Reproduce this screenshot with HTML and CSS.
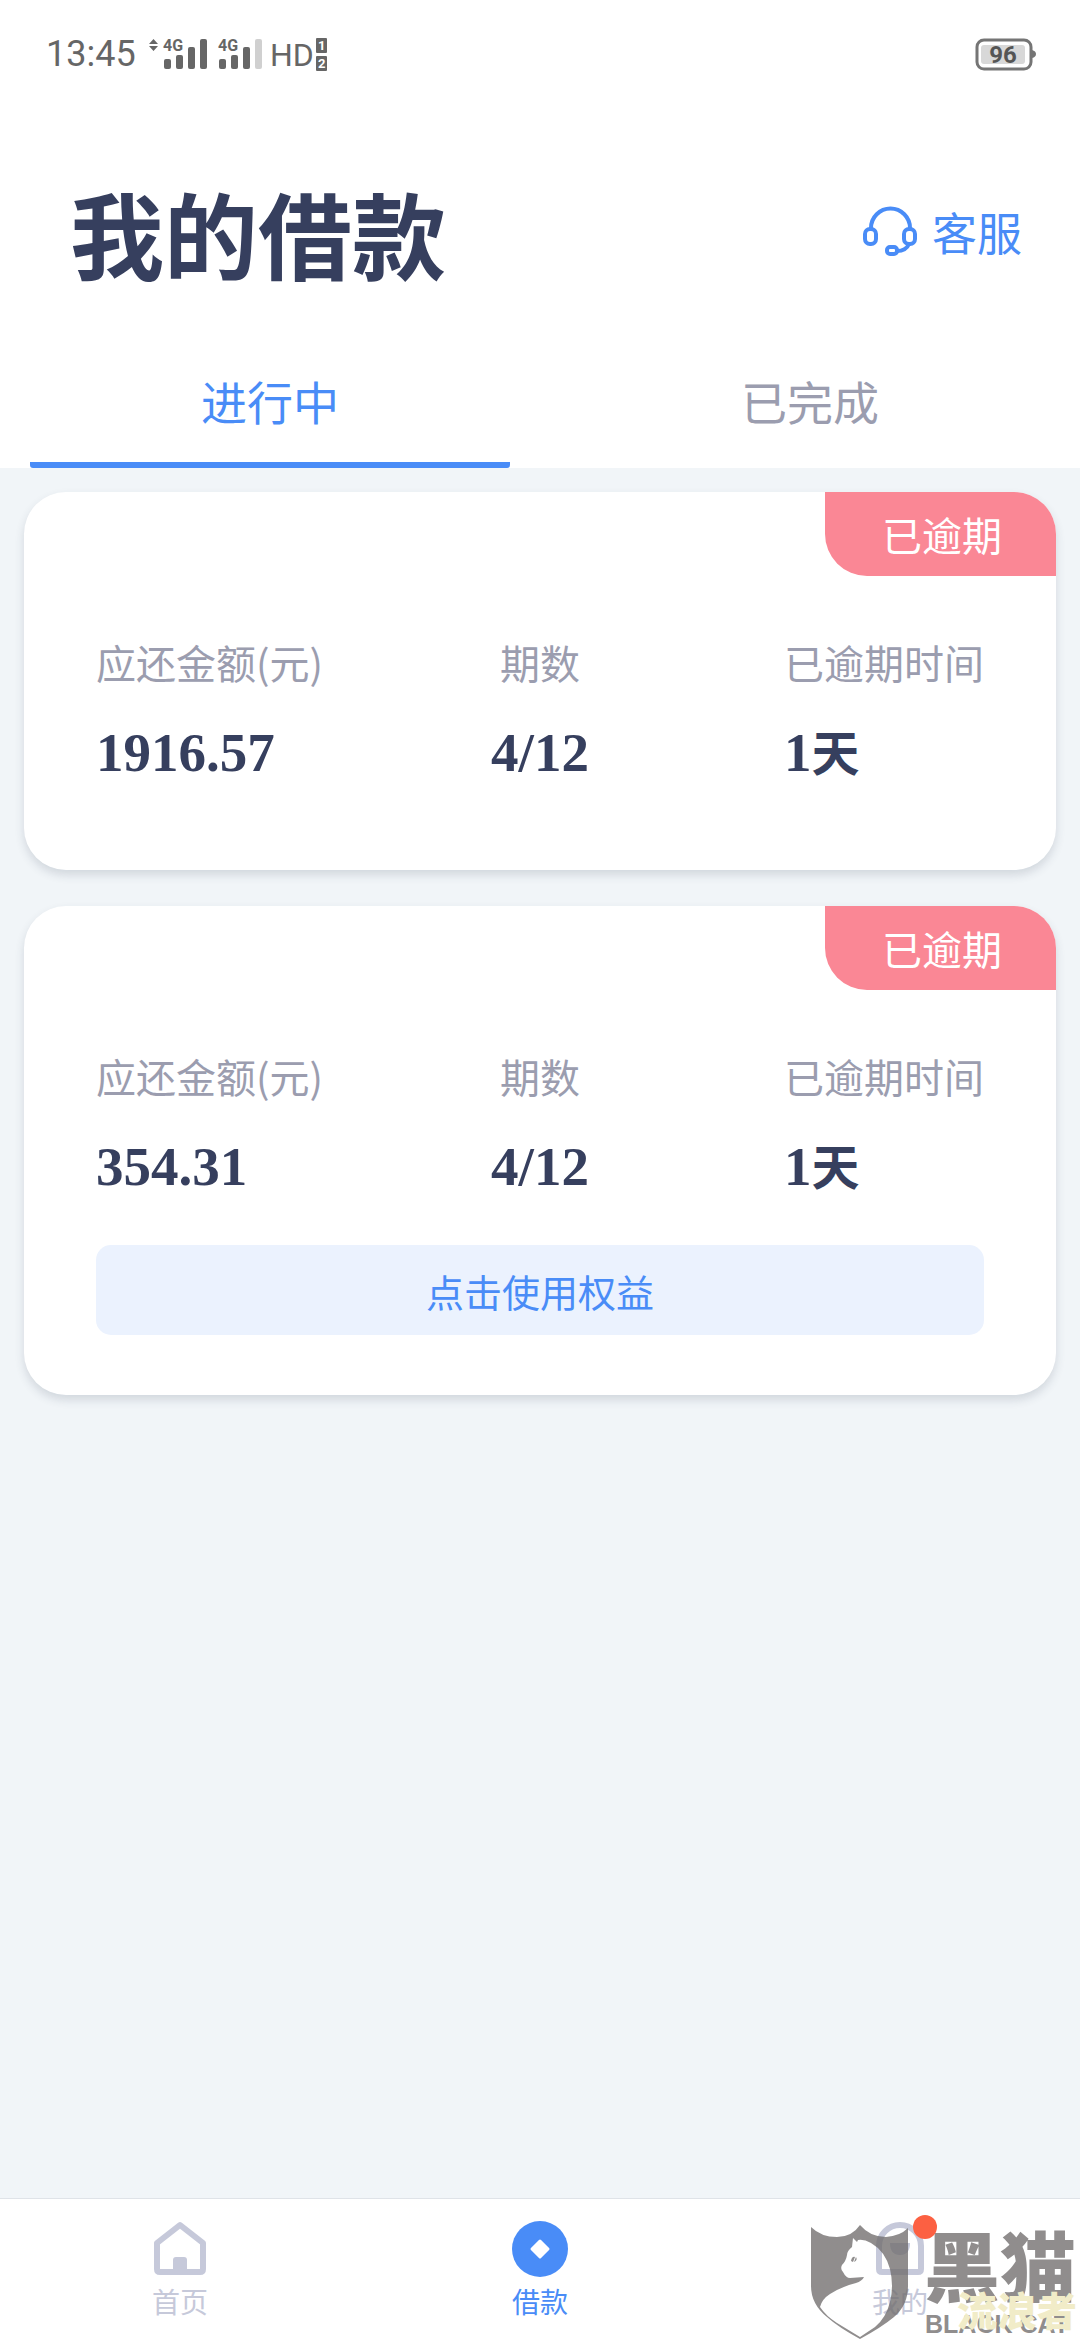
FILE: index.html
```html
<!DOCTYPE html>
<html lang="zh-CN">
<head>
<meta charset="utf-8">
<meta name="viewport" content="width=device-width, initial-scale=1">
<title>我的借款</title>
<link rel="stylesheet" href="styles.css">
</head>
<body>
<header class="top">
  <div class="status">
    <div class="status-left">
      <span class="time">13:45</span>
      <svg class="signals" width="180" height="36" viewBox="0 0 180 36" fill="#666">
        <path d="M1 8 5.500 3 10 8zM1 10h9l-4.500 5z"/>
        <text class="net" x="15" y="15">4G</text>
        <rect x="16" y="23" width="7" height="10" rx="2"/>
        <rect x="28" y="19" width="7" height="14" rx="2"/>
        <rect x="40" y="11" width="7" height="22" rx="2"/>
        <rect x="52" y="3" width="7" height="30" rx="2"/>
        <text class="net" x="70" y="15">4G</text>
        <rect x="71" y="23" width="7" height="10" rx="2"/>
        <rect x="83" y="19" width="7" height="14" rx="2"/>
        <rect x="95" y="11" width="7" height="22" rx="2"/>
        <rect x="107" y="3" width="7" height="30" rx="2" fill="#d0d0d0"/>
        <text class="hd" x="122" y="30">HD</text>
        <rect x="168" y="2" width="11" height="15" rx="1"/>
        <rect x="168" y="20" width="11" height="15" rx="1"/>
        <text class="sim" x="170" y="14">1</text>
        <text class="sim" x="170" y="32">2</text>
      </svg>
    </div>
    <svg class="battery" width="62" height="34" viewBox="0 0 62 34">
      <rect x="2" y="3" width="54" height="29" rx="7" fill="none" stroke="#757575" stroke-width="3"/>
      <rect x="6" y="8" width="44" height="19" rx="3" fill="#d8d8d8"/>
      <path d="M57 13q4 1 4 4t-4 4z" fill="#757575"/>
      <text class="charge" x="28" y="26">96</text>
    </svg>
  </div>
  <div class="heading">
    <h1>我的借款</h1>
    <a class="service" href="#service">
      <svg width="56" height="52" viewBox="0 0 56 52" fill="none" stroke="#498cf7" stroke-width="4">
        <path d="M9 22a19 19 0 0 1 39 0"/>
        <rect x="3" y="23" width="11" height="15" rx="5"/>
        <rect x="42" y="23" width="11" height="15" rx="5"/>
        <path d="M47 38q-3 7-12 7"/>
        <rect x="25" y="41" width="10" height="7" rx="3"/>
      </svg>
      客服
    </a>
  </div>
  <nav class="tabs">
    <a class="tab tab-active" href="#ongoing">进行中</a>
    <a class="tab" href="#finished">已完成</a>
  </nav>
</header>

<main class="loans">
  <article class="card">
    <span class="badge">已逾期</span>
    <dl class="facts">
      <div><dt>应还金额(元)</dt><dd>1916.57</dd></div>
      <div class="middle"><dt>期数</dt><dd>4/12</dd></div>
      <div class="last"><dt>已逾期时间</dt><dd>1<span class="unit">天</span></dd></div>
    </dl>
  </article>
  <article class="card">
    <span class="badge">已逾期</span>
    <dl class="facts">
      <div><dt>应还金额(元)</dt><dd>354.31</dd></div>
      <div class="middle"><dt>期数</dt><dd>4/12</dd></div>
      <div class="last"><dt>已逾期时间</dt><dd>1<span class="unit">天</span></dd></div>
    </dl>
    <button class="benefit" type="button">点击使用权益</button>
  </article>
</main>

<footer class="bottom">
  <nav class="menu">
    <a class="item" href="#home">
      <svg width="56" height="56" viewBox="0 0 56 56">
        <path d="M5 22 28 4l23 18v26q0 3-3 3H8q-3 0-3-3z" fill="none" stroke="#c6c9da" stroke-width="6" stroke-linejoin="round"/>
        <path d="M21 50V39q0-3 3-3h8q3 0 3 3v11z" fill="#c6c9da"/>
      </svg>
      首页
    </a>
    <a class="item item-active" href="#loans">
      <svg width="56" height="56" viewBox="0 0 56 56">
        <circle cx="28" cy="28" r="28" fill="#498cf7"/>
        <path d="M28 20l8 8-8 8-8-8z" fill="#fff" stroke="#fff" stroke-width="3" stroke-linejoin="round"/>
      </svg>
      借款
    </a>
    <a class="item" href="#mine">
      <svg width="56" height="56" viewBox="0 0 56 56">
        <path d="M7 25a21 21 0 0 1 42 0v23q0 3-3 3H10q-3 0-3-3z" fill="none" stroke="#c6c9da" stroke-width="6"/>
        <path d="M18 22h20q0 12-10 12T18 22z" fill="#c6c9da"/>
      </svg>
      我的
    </a>
  </nav>
  <svg class="watermark" width="270" height="120" viewBox="0 0 270 120">
    <g fill="#6f6c6c" opacity=".77">
      <path fill-rule="evenodd" d="M1 7Q11 17 27 17 42 17 50 5 60 17 76 17 90 16 98 8V66Q98 85 84 97 72 107 50 119 28 107 17 97 1 84 1 66ZM43 18 42 27Q37 31 37 35 36 41 32 45 30 49 33 52 36 58 40 58L54 57Q52 61 46 63 33 66 20 74 12 79 10 87 16 96 27 103L50 117 65 107Q76 98 80 82 84 66 80 49 75 31 61 23 54 19 48 20L47 22Z"/>
      <path d="M41 41q1-5 4-4l-2 5zM44 42l2-5q2 3-2 5z"/>
      <text class="brand" x="114" y="76">黑猫</text>
      <text class="brand-latin" x="115" y="113">BLACK CAT</text>
    </g>
    <text class="author" x="147" y="106">流浪者</text>
    <circle cx="115" cy="7" r="12" fill="#fc6042"/>
  </svg>
</footer>
</body>
</html>
```
FILE: styles.css
```css
* {
  box-sizing: border-box;
}

body {
  margin: 0;
  min-height: 100vh;
  display: flex;
  flex-direction: column;
  background: #f1f5f8;
  color: #363f5e;
  font-family: "Noto Sans CJK SC", sans-serif;
}

a {
  color: inherit;
  text-decoration: none;
}

svg {
  display: block;
  flex: none;
  overflow: visible;
}

.top {
  background: #fff;
}

.status {
  height: 108px;
  padding: 0 43px 0 46px;
  display: flex;
  align-items: center;
  justify-content: space-between;
}

.status-left {
  display: flex;
  align-items: center;
  gap: 12px;
}

.time {
  color: #666;
  font: 36px/44px Roboto, sans-serif;
}

.net,
.hd,
.sim,
.charge {
  font-family: Roboto, sans-serif;
}

.net {
  font-size: 16px;
  font-weight: 700;
}

.hd {
  font-size: 32px;
}

.sim {
  font-size: 13px;
  font-weight: 700;
  fill: #fff;
}

.charge {
  font-size: 24px;
  font-weight: 700;
  fill: #555;
  text-anchor: middle;
}

.heading {
  padding: 54px 58px 36px 70px;
  display: flex;
  align-items: center;
  justify-content: space-between;
}

h1 {
  margin: 0;
  font-size: 94px;
  line-height: 140px;
  font-weight: 700;
}

.service {
  display: flex;
  align-items: center;
  gap: 14px;
  color: #498cf7;
  font-size: 45px;
  line-height: 60px;
}

.tabs {
  padding: 0 30px;
  display: grid;
  grid-template-columns: 1fr 1fr;
  gap: 60px;
}

.tab {
  padding: 4px 0;
  border-bottom: 6px solid transparent;
  color: #9b9daf;
  font-size: 46px;
  line-height: 116px;
  text-align: center;
}

.tab-active {
  padding-bottom: 10px;
  border: 0;
  border-radius: 3px;
  background: linear-gradient(#498cf7, #498cf7) bottom / 100% 6px no-repeat;
  color: #498cf7;
}

.loans {
  flex: 1;
  padding: 24px;
  display: flex;
  flex-direction: column;
  gap: 36px;
}

.card {
  display: flex;
  flex-direction: column;
  padding-bottom: 60px;
  background: #fff;
  border-radius: 42px;
  box-shadow: 0 5px 10px rgba(50, 60, 90, 0.16);
}

.badge {
  align-self: flex-end;
  padding: 0 54px 0 57px;
  background: #fa8795;
  border-radius: 0 42px;
  color: #fff;
  font-size: 40px;
  line-height: 84px;
}

.facts {
  margin: 58px 72px 0;
  padding-bottom: 27px;
  display: grid;
  grid-template-columns: 1fr auto 1fr;
}

.middle {
  text-align: center;
}

.last {
  justify-self: end;
}

dt {
  color: #9b9daf;
  font-size: 40px;
  line-height: 56px;
}

dd {
  margin: 33px 0 0;
  height: 60px;
  font-family: "Liberation Serif", "Noto Sans CJK SC", serif;
  font-size: 55px;
  line-height: 60px;
  font-weight: 700;
}

.unit {
  font-size: 48px;
}

.benefit {
  margin: 21px 72px 0;
  height: 90px;
  border: 0;
  border-radius: 15px;
  background: #ebf2fe;
  color: #498cf7;
  font-family: inherit;
  font-size: 38px;
}

.bottom {
  position: relative;
  background: #fff;
  border-top: 1px solid #dfe3e8;
}

.menu {
  display: grid;
  grid-template-columns: repeat(3, 1fr);
}

.item {
  padding: 22px 0;
  display: flex;
  flex-direction: column;
  align-items: center;
  gap: 7px;
  color: #c6c9da;
  font-size: 28px;
  line-height: 34px;
}

.item-active {
  color: #498cf7;
}

.watermark {
  position: absolute;
  right: 0;
  bottom: 0;
}

.brand {
  font-size: 76px;
  font-weight: 900;
}

.brand-latin {
  font-family: "Liberation Sans", sans-serif;
  font-size: 25px;
  font-weight: 700;
}

.author {
  font-size: 40px;
  font-weight: 900;
  fill: #f1ecc8;
}
```
